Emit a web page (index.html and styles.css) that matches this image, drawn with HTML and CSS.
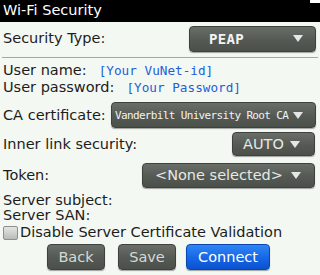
FILE: index.html
```html
<!DOCTYPE html>
<html>
<head>
<meta charset="utf-8">
<link rel="stylesheet" href="styles.css">
</head>
<body>
<div class="screen">
  <div class="titlebar">Wi-Fi Security</div>
  <div class="corner"></div>

  <div class="row row-type">
    <span class="label">Security Type:</span>
    <div class="dd dd-peap"><span class="dd-text mono-bold">PEAP</span><svg class="arrow" width="10" height="7" viewBox="0 0 10 7"><path d="M0 0H10L5 7Z"/></svg></div>
  </div>
  <div class="sep"></div>

  <div class="cred">
    <div class="line"><span class="label">User name:</span><span class="value">[Your VuNet-id]</span></div>
    <div class="line"><span class="label">User password:</span><span class="value">[Your Password]</span></div>
  </div>

  <div class="row row-ca">
    <span class="label">CA certificate:</span>
    <div class="dd dd-ca"><span class="dd-text mono-small">Vanderbilt University Root CA</span><svg class="arrow" width="10" height="7" viewBox="0 0 10 7"><path d="M0 0H10L5 7Z"/></svg></div>
  </div>

  <div class="row row-auto">
    <span class="label">Inner link security:</span>
    <div class="dd dd-auto"><span class="dd-text">AUTO</span><svg class="arrow" width="10" height="7" viewBox="0 0 10 7"><path d="M0 0H10L5 7Z"/></svg></div>
  </div>

  <div class="row row-token">
    <span class="label">Token:</span>
    <div class="dd dd-token"><span class="dd-text">&lt;None selected&gt;</span><svg class="arrow" width="10" height="7" viewBox="0 0 10 7"><path d="M0 0H10L5 7Z"/></svg></div>
  </div>

  <div class="server">
    <div class="sline label">Server subject:</div>
    <div class="sline label">Server SAN:</div>
  </div>

  <div class="check-row">
    <span class="checkbox"></span><span class="label">Disable Server Certificate Validation</span>
  </div>

  <div class="buttons">
    <div class="btn btn-gray btn-back">Back</div>
    <div class="btn btn-gray btn-save">Save</div>
    <div class="btn btn-blue btn-connect">Connect</div>
  </div>
</div>
</body>
</html>
```
FILE: styles.css
```css
* { box-sizing: border-box; }
html, body {
  margin: 0;
  padding: 0;
  width: 320px;
  height: 275px;
  overflow: hidden;
  background: #f4f8f3;
}
.screen {
  position: relative;
  width: 320px;
  height: 275px;
  font-family: "DejaVu Sans", "Liberation Sans", sans-serif;
  font-size: 14.5px;
  color: #1c1c1c;
}
.titlebar {
  height: 22px;
  background: #000;
  color: #fff;
  line-height: 21px;
  padding-left: 3px;
  font-size: 14.5px;
}
.corner {
  position: absolute;
  right: 0;
  top: 0;
  width: 10px;
  height: 3px;
  background: #fff;
}
.label {
  white-space: nowrap;
  line-height: 17px;
}
.row {
  display: flex;
  align-items: center;
  justify-content: space-between;
  padding: 0 4px 0 3px;
}
.row-type { height: 33px; }
.sep {
  height: 1px;
  margin: 2px 2px 0 2px;
  background: #a4a8a4;
}
.cred {
  padding: 4px 0 0 3px;
}
.line {
  display: flex;
  align-items: baseline;
  height: 17px;
}
.value {
  margin-left: 12px;
  font-family: "DejaVu Sans Mono", "Liberation Mono", monospace;
  font-size: 12.7px;
  color: #1f5ed6;
  line-height: 17px;
}
.row-ca { height: 30px; margin-top: 4px; }
.row-auto { height: 28px; }
.row-token { height: 34px; padding-right: 5px; }
.row-auto { padding-right: 5px; }
.dd {
  display: flex;
  align-items: center;
  justify-content: space-between;
  height: 26px;
  border-radius: 4px;
  background: linear-gradient(#6a6e69, #555954 55%, #4c504b);
  border: 1px solid #3e413d;
  box-shadow: 0 1px 1px rgba(0,0,0,0.35);
  color: #f2f4f2;
}
.dd-text { white-space: nowrap; }
.arrow { fill: #e4e7e4; flex: none; }
.dd-peap { width: 127px; padding: 0 12px 0 19px; }
.dd-ca { width: 205px; padding: 0 12px 0 3px; }
.dd-auto { width: 83px; height: 24px; padding: 0 14px 0 10px; color: #e6e9e6; }
.dd-token { width: 173px; height: 25px; padding: 0 13px 0 12px; color: #e6e9e6; }
.mono-bold {
  font-family: "DejaVu Sans Mono", "Liberation Mono", monospace;
  font-weight: bold;
  font-size: 14px;
  letter-spacing: 0.3px;
}
.mono-small {
  font-family: "DejaVu Sans Mono", "Liberation Mono", monospace;
  font-size: 11px;
  letter-spacing: -0.65px;
}
.server {
  padding: 1px 0 0 3px;
}
.sline {
  line-height: 15px;
  height: 15px;
}
.check-row {
  display: flex;
  align-items: center;
  height: 19px;
  padding-left: 3px;
  margin-top: 0px;
}
.checkbox {
  width: 15px;
  height: 14px;
  margin-right: 2px;
  border: 1px solid #8c8f8c;
  border-radius: 2px;
  background: linear-gradient(#e4e6e4, #b8bbb8);
}
.buttons {
  display: flex;
  padding-left: 47px;
  gap: 12px;
  margin-top: 2px;
}
.btn {
  height: 26px;
  border-radius: 4px;
  display: flex;
  align-items: center;
  justify-content: center;
  font-size: 14.5px;
  box-shadow: 0 1px 1px rgba(0,0,0,0.35);
}
.btn-gray {
  width: 58px;
  color: #d6d9d6;
  background: linear-gradient(#6a6e69, #555954 55%, #4c504b);
  border: 1px solid #3e413d;
}
.btn-save { margin-left: 1px; }
.btn-connect { margin-left: -2px; }
.btn-blue {
  width: 84px;
  color: #fff;
  background: linear-gradient(#2f86f6, #1565e4 55%, #0b52cf);
  border: 1px solid #0a45b0;
}
```
